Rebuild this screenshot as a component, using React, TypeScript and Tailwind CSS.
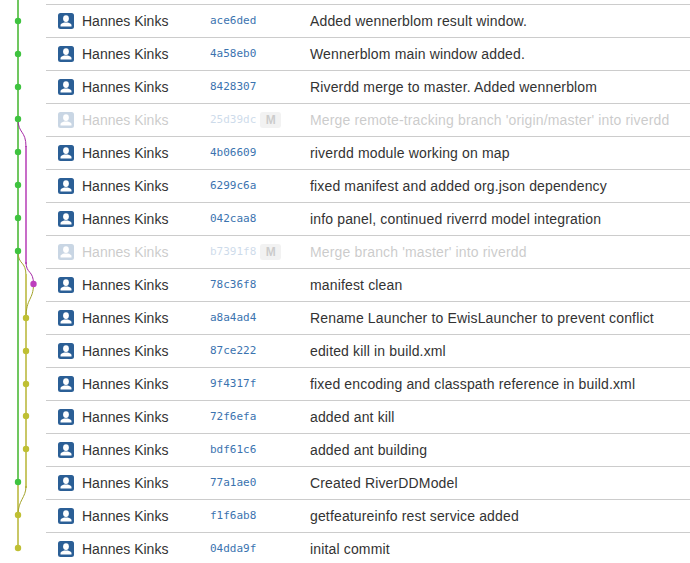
const rows: [string, string, boolean?][] = [
  ["ace6ded", "Added wennerblom result window."],
  ["4a58eb0", "Wennerblom main window added."],
  ["8428307", "Riverdd merge to master. Added wennerblom"],
  ["25d39dc", "Merge remote-tracking branch 'origin/master' into riverdd", true],
  ["4b06609", "riverdd module working on map"],
  ["6299c6a", "fixed manifest and added org.json dependency"],
  ["042caa8", "info panel, continued riverrd model integration"],
  ["b7391f8", "Merge branch 'master' into riverdd", true],
  ["78c36f8", "manifest clean"],
  ["a8a4ad4", "Rename Launcher to EwisLauncher to prevent conflict"],
  ["87ce222", "edited kill in build.xml"],
  ["9f4317f", "fixed encoding and classpath reference in build.xml"],
  ["72f6efa", "added ant kill"],
  ["bdf61c6", "added ant building"],
  ["77a1ae0", "Created RiverDDModel"],
  ["f1f6ab8", "getfeatureinfo rest service added"],
  ["04dda9f", "inital commit"],
];

function Avatar() {
  return (
    <svg width="16" height="16" viewBox="0 0 16 16" className="shrink-0">
      <rect width="16" height="16" rx="2.5" fill="#2b5f96" />
      <ellipse cx="8" cy="5.6" rx="2.9" ry="3.4" fill="#fff" />
      <path d="M2.5 13.5v-1.4c0-1.5 2-2.3 3.6-2.7h3.8c1.6.4 3.6 1.2 3.6 2.7v1.4z" fill="#fff" />
    </svg>
  );
}

const greenNode = "#3fc33f";
const olive = "#c9c766";
const oliveNode = "#bfbf33";
const thinOlive = "#a3a32a";
const thinMagenta = "#a528a5";

function Graph() {
  const greenYs = [21, 54, 87, 119, 152, 185, 218, 251, 482];
  const oliveYs = [318, 351, 384, 416, 449];
  const oliveLow = [515, 548];
  return (
    <svg width="46" height="563" className="absolute left-0 top-0">
      <path d="M18 0V482" stroke="#70c760" strokeWidth="2" fill="none" />
      <path d="M18 482V548" stroke={olive} strokeWidth="2" fill="none" />
      <path d="M26 146V264" stroke="#c86cc8" strokeWidth="2" fill="none" />
      <path d="M18 119C18 134 26 130 26 147" stroke={thinMagenta} strokeWidth="1" fill="none" />
      <path d="M26 262C26 274 33.5 270 33.5 284" stroke={thinMagenta} strokeWidth="1" fill="none" />
      <path d="M18 251C18 266 26 260 26 276" stroke={thinOlive} strokeWidth="1" fill="none" />
      <path d="M26 274V488" stroke={olive} strokeWidth="2" fill="none" />
      <path d="M33.5 284C33.5 300 26 298 26 318" stroke={thinOlive} strokeWidth="1" fill="none" />
      <path d="M26 486C26 498 18 500 18 515" stroke={thinOlive} strokeWidth="1" fill="none" />
      {greenYs.map((y) => <circle key={y} cx="18" cy={y} r="3.2" fill={greenNode} />)}
      <circle cx="33.5" cy="284" r="3.2" fill="#bd3fbd" />
      {oliveYs.map((y) => <circle key={y} cx="26" cy={y} r="3.2" fill={oliveNode} />)}
      {oliveLow.map((y) => <circle key={y} cx="18" cy={y} r="3.2" fill={oliveNode} />)}
    </svg>
  );
}

export default function App() {
  return (
    <div className="relative h-[563px] w-[690px] overflow-hidden bg-white font-['Liberation_Sans',Arial,sans-serif] text-sm text-[#333333]">
      <Graph />
      <div className="ml-[46px] pt-1">
        {rows.map(([hash, msg, merge]) => (
          <div key={hash} className="flex h-[33px] items-center border-t border-[#cccccc]">
            <div className={`ml-3 flex w-[152px] items-center gap-2 ${merge ? "opacity-25" : ""}`}>
              <Avatar />
              <span>Hannes Kinks</span>
            </div>
            <div className={`flex w-[100px] items-center gap-[4px] ${merge ? "opacity-25" : ""}`}>
              <span className="font-['DejaVu_Sans_Mono',monospace] text-[11px] text-[#3b73af]">{hash}</span>
              {merge && <span className="rounded-[3px] bg-[#cccccc] px-[5.5px] text-[12px] font-bold leading-4 text-[#333333]">M</span>}
            </div>
            <span className={`whitespace-nowrap tracking-[0.15px] ${merge ? "opacity-25" : ""}`}>{msg}</span>
          </div>
        ))}
      </div>
    </div>
  );
}
